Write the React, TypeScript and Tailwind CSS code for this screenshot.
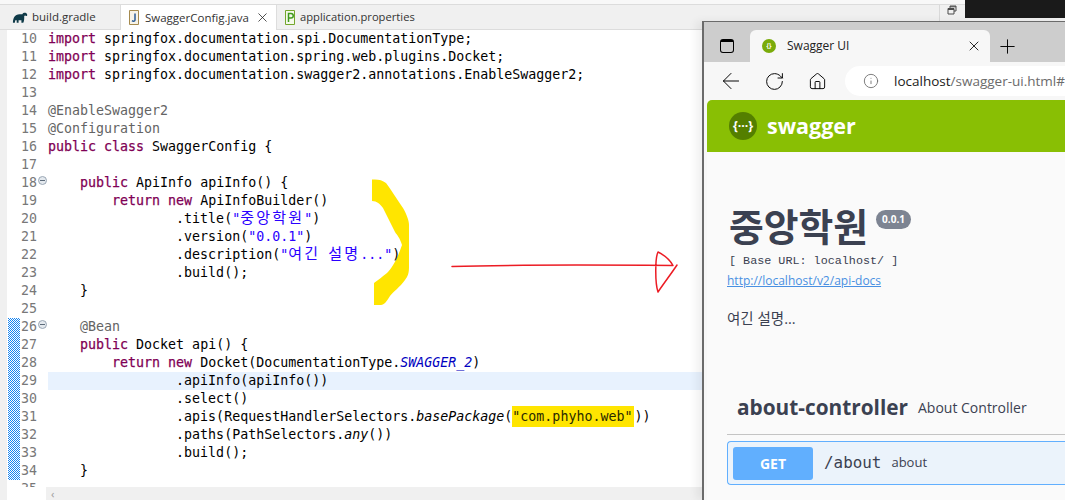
import type { ReactNode } from 'react'
import { Info, RotateCw, House, ArrowLeft, X, Plus } from 'lucide-react'

const kw = (s: string) => <span className="text-[#7f0055] [-webkit-text-stroke:0.25px_#7f0055]">{s}</span>
const an = (s: string) => <span className="text-[#646464]">{s}</span>
const str = (s: ReactNode) => <span className="text-[#2a00ff]">{s}</span>
const it = (s: string) => <span className="italic">{s}</span>
const ko = (s: string) => <span className="text-[15px] leading-none tracking-[2.200px]">{s}</span>

const pad4 = '    '
const pad8 = '        '
const pad16 = '                '

const lines: { n: number; fold?: boolean; active?: boolean; body: ReactNode }[] = [
  { n: 10, body: <>{kw('import')} springfox.documentation.spi.DocumentationType;</> },
  { n: 11, body: <>{kw('import')} springfox.documentation.spring.web.plugins.Docket;</> },
  { n: 12, body: <>{kw('import')} springfox.documentation.swagger2.annotations.EnableSwagger2;</> },
  { n: 13, body: '' },
  { n: 14, body: an('@EnableSwagger2') },
  { n: 15, body: an('@Configuration') },
  { n: 16, body: <>{kw('public')} {kw('class')} SwaggerConfig {'{'}</> },
  { n: 17, body: '' },
  { n: 18, fold: true, body: <>{pad4}{kw('public')} ApiInfo apiInfo() {'{'}</> },
  { n: 19, body: <>{pad8}{kw('return')} {kw('new')} ApiInfoBuilder()</> },
  { n: 20, body: <>{pad16}.title({str(<>"{ko('중앙학원')}"</>)})</> },
  { n: 21, body: <>{pad16}.version({str('"0.0.1"')})</> },
  { n: 22, body: <>{pad16}.description({str(<>"{ko('여긴')} {ko('설명')}..."</>)})</> },
  { n: 23, body: <>{pad16}.build();</> },
  { n: 24, body: <>{pad4}{'}'}</> },
  { n: 25, body: '' },
  { n: 26, fold: true, body: <>{pad4}{an('@Bean')}</> },
  { n: 27, body: <>{pad4}{kw('public')} Docket api() {'{'}</> },
  { n: 28, body: <>{pad8}{kw('return')} {kw('new')} Docket(DocumentationType.<span className="italic text-[#0000c0]">SWAGGER_2</span>)</> },
  { n: 29, active: true, body: <>{pad16}.apiInfo(apiInfo())</> },
  { n: 30, body: <>{pad16}.select()</> },
  { n: 31, body: <>{pad16}.apis(RequestHandlerSelectors.{it('basePackage')}(<span className="bg-[#ffe500] py-[3px] pr-[2px] text-[#2a2a00]">"com.phyho.web"</span>))</> },
  { n: 32, body: <>{pad16}.paths(PathSelectors.{it('any')}())</> },
  { n: 33, body: <>{pad16}.build();</> },
  { n: 34, body: <>{pad4}{'}'}</> },
  { n: 35, body: '' },
]

function GradleIcon() {
  return (
    <svg width="16" height="13" viewBox="0 0 17 13" className="shrink-0">
      <path d="M1 12c0-5 2-9 7-9h3c1-2 4-2 5 0 .5 1 0 2-1 2-.5-1-1.500-1-2 0 0 3 0 5-1 7h-2V9.500H7V12H5V9.500H3.500L3 12Z" fill="#0f3a48" />
    </svg>
  )
}

function JavaIcon() {
  return (
    <svg width="12" height="15" viewBox="0 0 12 15" className="shrink-0">
      <path d="M1.500.5h9v14h-9z" fill="#f7f3e8" stroke="#a58a4e" />
      <path d="M7 3.500v6.500c0 1.500-2 1.500-3 .7" fill="none" stroke="#2d5c96" strokeWidth="1.500" />
    </svg>
  )
}

function PropsIcon() {
  return (
    <svg width="12" height="15" viewBox="0 0 12 15" className="shrink-0">
      <path d="M1.500.5h9v14h-9z" fill="#f4f9ea" stroke="#74a72d" />
      <path d="M4.500 12V3.500H7a2 2 0 0 1 0 4.500H4.500" fill="none" stroke="#3f9a1e" strokeWidth="1.500" />
    </svg>
  )
}

function BracesLogo({ size }: { size: number }) {
  return (
    <span
      className="flex items-center justify-center rounded-full font-bold text-white"
      style={{ width: size, height: size, fontSize: size * 0.44, background: size > 20 ? '#547f00' : '#7aab0a' }}
    >
      {size > 20 ? '{···}' : '{}'}
    </span>
  )
}

function Editor() {
  return (
    <div className="relative h-[457px] overflow-hidden bg-white font-['DejaVu_Sans_Mono','Noto_Sans_CJK_KR',monospace] text-[13.300px] text-black">
      {/* yellow marker stroke, sits under the code */}
      <svg width="60" height="140" viewBox="0 0 60 140" className="absolute left-[360px] top-[142px]">
        <path
          d="M12 7.500C18 7 22 8 26 11C30 16 38 29 43 36C47 43 49 49 49 53V95C49 101 48 104 45 108C40 115 33 120 30 124C27 129 24 133 21 133H14V111C18 108 22 105 27 101C32 96 37 88 42 73C40 66 37 63 35 60C31 52 27 44 23 36C20 32 17 29 12 29Z"
          fill="#ffe500"
        />
      </svg>
      {/* quick diff hatch in the gutter */}
      <svg width="12" height="162" className="absolute left-[8px] top-[288px]">
        <pattern id="hatch" width="2" height="2" patternUnits="userSpaceOnUse">
          <rect width="2" height="2" fill="#ffffff" />
          <rect width="1" height="1" fill="#1684f0" />
          <rect x="1" y="1" width="1" height="1" fill="#1684f0" />
        </pattern>
        <rect width="12" height="162" fill="url(#hatch)" />
      </svg>
      {lines.map((l) => (
        <div key={l.n} className="relative flex h-[18px] leading-[18px]">
          <div className="h-full w-[7px] shrink-0 bg-[#f0f0f0]" />
          <div className="ml-px h-full w-[12px] shrink-0" />
          <div className="w-[28px] shrink-0 whitespace-pre pl-px text-[#787878]">
            <span className="relative">
              {l.n}
              {l.fold && (
                <span className="absolute left-[17px] top-px flex h-[9px] w-[9px] items-center justify-center rounded-full border border-[#9aa7b5] bg-[#e4e9ee]">
                  <span className="h-px w-[5px] bg-[#5d6b7a]" />
                </span>
              )}
            </span>
          </div>
          <div className={`grow whitespace-pre ${l.active ? 'bg-[#e8f2fe]' : ''}`}>{l.body}</div>
        </div>
      ))}
    </div>
  )
}

function Ide() {
  return (
    <div className="flex h-full flex-col">
      <div className="h-[30px] bg-[#f8f8f8] pt-[4px] font-['Open_Sans','Noto_Sans_CJK_KR',sans-serif] text-[11.500px] text-[#333333]">
        <div className="flex h-[26px] items-stretch border-y border-[#dcdcdc] bg-[#f0f0f0] pl-[7px]">
          <div className="flex w-[113px] items-center gap-[4px] pl-[5px]">
            <GradleIcon />
            <span>build.gradle</span>
          </div>
          <div className="-mb-px flex w-[157px] items-center border-x border-[#dddddd] bg-white pl-[7px]">
            <JavaIcon />
            <span className="ml-[5px]">SwaggerConfig.java</span>
            <X size={15} strokeWidth={1.250} className="ml-[6px] text-[#222222]" />
          </div>
          <div className="flex w-[140px] items-center gap-[4px] pl-[7px]">
            <PropsIcon />
            <span className="whitespace-nowrap text-[11.200px]">application.properties</span>
          </div>
          <div className="grow border-r border-[#d9d9d9]" />
          <div className="flex w-[125px] items-start pl-[7px]">
            <svg width="10" height="10" viewBox="0 0 10 10">
              <path d="M3 3V1h6v5H7M1 3.500h6v5.500H1zM1 4.500h6M3 1.800h6" fill="none" stroke="#4a4a4a" />
            </svg>
          </div>
        </div>
      </div>
      <Editor />
      <div className="flex grow bg-white">
        <div className="w-[7px] bg-[#f0f0f0]" />
        <div className="w-[39px]" />
        <div className="flex grow items-center bg-[#f0f0f0] pl-[5px] text-[11px] leading-none text-[#a0a0a0]">‹</div>
      </div>
    </div>
  )
}

function ToolbarButton({ children }: { children: ReactNode }) {
  return <div className="flex w-[44px] items-center justify-center text-black">{children}</div>
}

function BrowserWindow() {
  return (
    <div className="absolute left-[702px] top-[21px] flex h-[479px] w-[363px] flex-col border-l-2 border-t border-[#6b6b6b] bg-[#f7f7f7] font-['Open_Sans','Noto_Sans_CJK_KR',sans-serif] shadow-[-6px_0_8px_rgba(0,0,0,0.06)]">
      {/* tab strip */}
      <div className="flex h-[40px] items-end bg-[#cdcdcd]">
        <div className="flex h-[32px] w-[46px] items-center justify-center pb-[1px]">
          <div className="h-[14px] w-[14px] rounded-[3px] border border-black border-t-[3px]" />
        </div>
        <div className="flex h-[32px] w-[240px] items-center rounded-t-[6px] bg-[#f7f7f7] pl-[12px] pr-[8px]">
          <BracesLogo size={14} />
          <span className="ml-[11px] grow text-[12px] text-[#222222]">Swagger UI</span>
          <X size={16} strokeWidth={1.250} className="text-black" />
        </div>
        <div className="flex h-[32px] w-[34px] items-center justify-center">
          <Plus size={23} strokeWidth={1} className="text-black" />
        </div>
      </div>
      {/* toolbar */}
      <div className="flex h-[38px] items-center pl-[5px]">
        <ToolbarButton><ArrowLeft size={26} strokeWidth={0.900} /></ToolbarButton>
        <ToolbarButton><RotateCw size={21} strokeWidth={1.100} /></ToolbarButton>
        <ToolbarButton><House size={19} strokeWidth={1.200} /></ToolbarButton>
        <div className="ml-[6px] flex h-[30px] grow items-center rounded-l-[15px] bg-white pl-[18px]">
          <Info size={16} strokeWidth={1.250} className="text-[#666666]" />
          <span className="ml-[15px] whitespace-nowrap text-[13.500px] text-[#1a1a1a]">
            localhost<span className="text-[#6b6b6b]">/swagger-ui.html#</span>
          </span>
        </div>
      </div>
      {/* page */}
      <div className="ml-[3px] flex grow flex-col overflow-hidden bg-[#fafafa]">
        <div className="flex h-[52px] shrink-0 items-center rounded-tl-[5px] bg-[#89bf04] pl-[22px]">
          <BracesLogo size={28} />
          <span className="ml-[10px] pt-px text-[21.500px] font-bold text-white">swagger</span>
        </div>
        <div className="flex flex-col pl-[20px]">
          <div className="mt-[49px] flex h-[48px] items-start text-[#3b4151]">
            <span className="pl-[2px] font-['Noto_Sans_CJK_KR',sans-serif] text-[37.800px] font-bold leading-[48px]">중앙학원</span>
            <span className="ml-[8px] mt-[9px] rounded-[10px] bg-[#7d8492] px-[6px] py-[2px] text-[10px] font-bold leading-[15px] text-white">0.0.1</span>
          </div>
          <div className="mt-[5px] pl-[2px] font-['Liberation_Mono',monospace] text-[11.750px] leading-[14px] text-[#3b4151]">[ Base URL: localhost/ ]</div>
          <div className="mt-[4px] text-[12px] leading-[17px] text-[#4990e2] underline">http://localhost/v2/api-docs</div>
          <div className="mt-[20px] text-[14.500px] leading-[20px] text-[#3b4151]">여긴 설명...</div>
          <div className="mt-[63px] flex items-center pl-[10px] text-[#3b4151]">
            <span className="text-[20.800px] font-bold leading-[30px]">about-controller</span>
            <span className="ml-[10px] text-[14px]">About Controller</span>
          </div>
          <div className="mt-[12px] h-px bg-[#c4c4c4]" />
          <div className="mt-[6px] flex h-[44px] items-center rounded-l-[4px] border border-r-0 border-[#61affe] bg-[#ebf3fb] pl-[5px]">
            <span className="flex h-[33px] w-[80px] items-center justify-center rounded-[3px] bg-[#61affe] text-[14px] font-bold text-white">GET</span>
            <span className="ml-[11px] font-['DejaVu_Sans_Mono',monospace] text-[15.900px] text-[#3b4151]">/about</span>
            <span className="ml-[10px] text-[13px] text-[#3b4151]">about</span>
          </div>
        </div>
      </div>
    </div>
  )
}

export default function App() {
  return (
    <div className="relative h-[500px] w-[1065px] overflow-hidden bg-white">
      <Ide />
      {/* black strip behind the top right corner */}
      <div className="absolute right-0 top-0 h-[18px] w-[100px] bg-[#1a1a1a]" />
      <BrowserWindow />
      {/* red hand drawn arrow */}
      <svg width="240" height="60" viewBox="0 0 240 60" className="absolute left-[445px] top-[245px]">
        <path
          d="M7 21.500C70 19.500 160 20 228 20.500C224 13 219 10 213 7C210 13 210 38 213 47C219 38 226 29 232 20"
          fill="none"
          stroke="#ec1c24"
          strokeWidth="1.500"
          strokeLinecap="round"
          strokeLinejoin="round"
        />
      </svg>
    </div>
  )
}
